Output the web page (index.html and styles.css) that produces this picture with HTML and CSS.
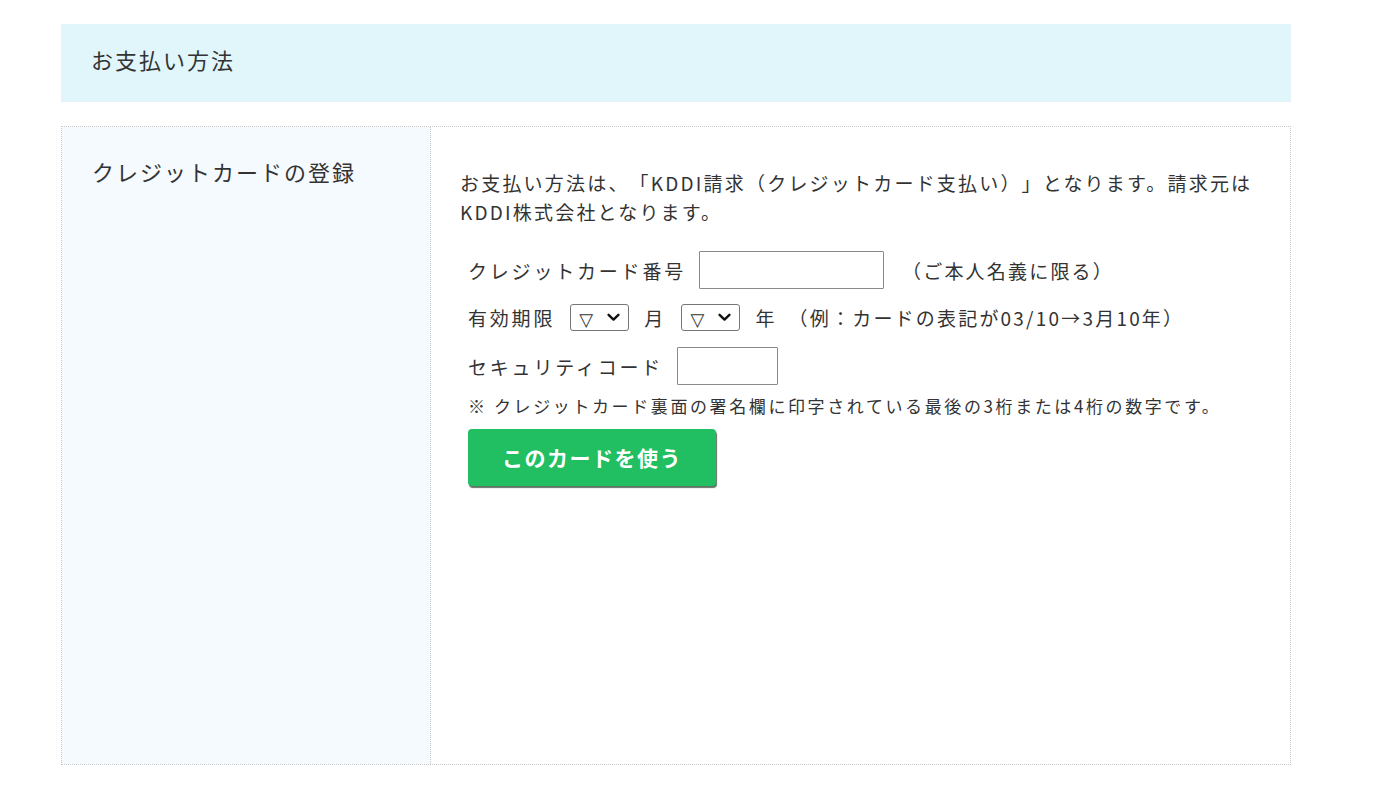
FILE: index.html
```html
<!DOCTYPE html>
<html lang="ja">
<head>
<meta charset="utf-8">
<title>お支払い方法</title>
<link rel="stylesheet" href="styles.css">
</head>
<body>
<div class="page">
  <div class="section-head">お支払い方法</div>
  <div class="pay-table">
    <div class="pay-label">クレジットカードの登録</div>
    <div class="pay-body">
      <p class="lead">お支払い方法は、「KDDI請求（クレジットカード支払い）」となります。請求元は<br>KDDI株式会社となります。</p>
      <div class="row row-card">
        <span class="lbl">クレジットカード番号</span>
        <input class="txt txt-card" type="text">
        <span class="aside">（ご本人名義に限る）</span>
      </div>
      <div class="row row-exp">
        <span class="lbl">有効期限</span>
        <span class="sel-wrap">
          <select class="sel"><option>▽</option></select>
          <svg class="chev" width="13" height="9" viewBox="0 0 13 9"><path d="M1.6 1.8 L6.5 6.6 L11.4 1.8" fill="none" stroke="#111" stroke-width="2.4" stroke-linecap="round" stroke-linejoin="round"/></svg>
        </span>
        <span class="unit unit-month">月</span>
        <span class="sel-wrap">
          <select class="sel"><option>▽</option></select>
          <svg class="chev" width="13" height="9" viewBox="0 0 13 9"><path d="M1.6 1.8 L6.5 6.6 L11.4 1.8" fill="none" stroke="#111" stroke-width="2.4" stroke-linecap="round" stroke-linejoin="round"/></svg>
        </span>
        <span class="unit">年</span>
        <span class="example">（例：カードの表記が03/10→3月10年）</span>
      </div>
      <div class="row row-sec">
        <span class="lbl">セキュリティコード</span>
        <input class="txt txt-sec" type="text">
      </div>
      <p class="note">※ クレジットカード裏面の署名欄に印字されている最後の3桁または4桁の数字です。</p>
      <button class="btn" type="button">このカードを使う</button>
    </div>
  </div>
</div>
</body>
</html>
```

FILE: styles.css
```css
html, body {
  margin: 0;
  padding: 0;
  background: #fff;
}
body {
  font-family: "Noto Sans CJK JP", "Noto Sans", sans-serif;
  color: #333;
  text-spacing-trim: space-all;
}
.page {
  width: 1230px;
  margin-left: 61px;
  padding-top: 24px;
}
.section-head {
  height: 78px;
  background: #e0f6fb;
  padding: 0 0 8px 30px;
  display: flex;
  align-items: center;
  font-size: 22px;
  letter-spacing: 2px;
  color: #333;
  box-sizing: border-box;
}
.pay-table {
  margin-top: 24px;
  height: 639px;
  border: 1px dotted #c8c8c8;
  display: flex;
  box-sizing: border-box;
}
.pay-label {
  width: 369px;
  flex: none;
  background: #f5faff;
  border-right: 1px dotted #c8c8c8;
  padding: 29px 0 0 30px;
  box-sizing: border-box;
  font-size: 22px;
  letter-spacing: 2px;
  line-height: 30px;
}
.pay-body {
  flex: 1;
  padding: 41px 0 0 29px;
  font-size: 19px;
  letter-spacing: 2.2px;
  line-height: 29px;
}
.lead {
  margin: 0;
}
.row {
  display: flex;
  align-items: center;
  padding-left: 8px;
}
.lbl {
  letter-spacing: 2.8px;
}
.row-card {
  margin-top: 25px;
  height: 38px;
}
.row-exp {
  margin-top: 14px;
  height: 29px;
}
.row-sec {
  margin-top: 15px;
  height: 38px;
}
.txt {
  height: 38px;
  box-sizing: border-box;
  border: 1px solid #8a8a8a;
  border-radius: 1px;
  margin: 0 0 0 13px;
  padding: 0 4px;
  background: #fff;
  font: inherit;
}
.txt-card {
  width: 185px;
}
.txt-sec {
  width: 101px;
  margin-left: 14px;
}
.aside {
  margin-left: 18px;
}
.sel-wrap {
  position: relative;
  display: inline-flex;
  margin-left: 15px;
}
.sel {
  appearance: none;
  -webkit-appearance: none;
  width: 59px;
  height: 27px;
  box-sizing: border-box;
  margin: 0;
  border: 1px solid #767676;
  border-radius: 3px;
  background: #fff;
  color: #333;
  font-family: "DejaVu Sans", sans-serif;
  font-size: 18px;
  line-height: 25px;
  letter-spacing: 0;
  padding: 2px 0 0 8px;
}
.chev {
  position: absolute;
  right: 9px;
  top: 9px;
  pointer-events: none;
}
.unit {
  margin-left: 15px;
  margin-right: -1px;
}
.unit-month {
  margin-right: 1px;
}
.example {
  margin-left: 13px;
  letter-spacing: 2.2px;
}
.note {
  margin: 6px 0 0 0;
  padding-left: 8px;
  font-size: 17px;
  letter-spacing: 2.6px;
}
.btn {
  margin: 9px 0 0 8px;
  width: 248px;
  height: 57px;
  border: none;
  border-radius: 4px;
  background: #22bf62;
  color: #fff;
  font-family: "Noto Sans CJK JP", sans-serif;
  font-weight: bold;
  font-size: 21px;
  letter-spacing: 1.5px;
  padding-bottom: 3px;
  box-shadow: 1px 2px 1px rgba(40, 70, 50, 0.75);
  cursor: pointer;
}
```
